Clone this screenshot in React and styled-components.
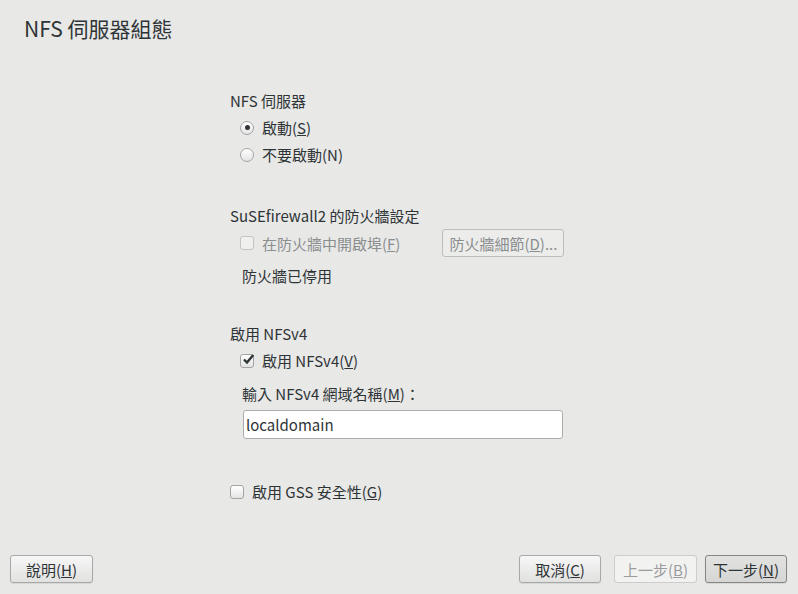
import React, { useState } from 'react';
import styled, { createGlobalStyle } from 'styled-components';

const GlobalStyle = createGlobalStyle`
  html, body {
    margin: 0;
    padding: 0;
    background: #e8e8e7;
  }
  body {
    font-family: "Noto Sans CJK TC", "Noto Sans", sans-serif;
    font-size: 15px;
    color: #2e3436;
  }
`;

const NfsServerConfig = () => {
  const [start, setStart] = useState('yes');
  const [nfs4, setNfs4] = useState(true);
  const [gss, setGss] = useState(false);
  const [domain, setDomain] = useState('localdomain');

  return (
    <Page>
      <GlobalStyle />
      <Header>NFS 伺服器組態</Header>
      <Content>
        <SectionLabel>NFS 伺服器</SectionLabel>
        <OptionRow indent={10}>
          <Radio checked={start === 'yes'} onClick={() => setStart('yes')} />
          <span>啟動(<u>S</u>)</span>
        </OptionRow>
        <OptionRow indent={10}>
          <Radio checked={start === 'no'} onClick={() => setStart('no')} />
          <span>不要啟動(N)</span>
        </OptionRow>

        <SectionLabel top={35} h={26}>SuSEfirewall2 的防火牆設定</SectionLabel>
        <OptionRow indent={10} h={28}>
          <Check disabled />
          <Muted>在防火牆中開啟埠(<u>F</u>)</Muted>
          <SmallButton disabled>防火牆細節(<u>D</u>)...</SmallButton>
        </OptionRow>
        <PlainText top={6}>防火牆已停用</PlainText>

        <SectionLabel top={32}>啟用 NFSv4</SectionLabel>
        <OptionRow indent={10}>
          <Check checked={nfs4} onClick={() => setNfs4(!nfs4)}>
            {nfs4 && (
              <svg width="13" height="13" viewBox="0 0 12 12">
                <path d="M1.8 6 L4.6 8.8 L10.4 1.8" fill="none" stroke="#2e3436" strokeWidth="2.2" />
              </svg>
            )}
          </Check>
          <span>啟用 NFSv4(<u>V</u>)</span>
        </OptionRow>
        <PlainText top={7}>輸入 NFSv4 網域名稱(<u>M</u>)：</PlainText>
        <DomainInput value={domain} onChange={(e) => setDomain(e.target.value)} />

        <OptionRow top={39}>
          <Check checked={gss} onClick={() => setGss(!gss)} />
          <span>啟用 GSS 安全性(<u>G</u>)</span>
        </OptionRow>
      </Content>
      <Footer>
        <Button>說明(<u>H</u>)</Button>
        <FooterRight>
          <Button w={82}>取消(<u>C</u>)</Button>
          <Button w={83} disabled style={{ marginLeft: 13 }}>上一步(<u>B</u>)</Button>
          <Button w={82} primary style={{ marginLeft: 8 }}>下一步(<u>N</u>)</Button>
        </FooterRight>
      </Footer>
    </Page>
  );
};

const Page = styled.div`
  height: 594px;
  display: flex;
  flex-direction: column;
  box-sizing: border-box;
`;

const Header = styled.div`
  font-size: 21px;
  line-height: 24px;
  padding: 16px 0 0 24px;
  height: 40px;
  box-sizing: border-box;
`;

const Content = styled.div`
  flex: 1;
  display: flex;
  flex-direction: column;
  padding: 48px 0 0 230px;
`;

const SectionLabel = styled.div`
  height: ${(p) => p.h || 26}px;
  line-height: ${(p) => p.h || 26}px;
  margin-top: ${(p) => p.top || 0}px;
`;

const OptionRow = styled.div`
  display: flex;
  align-items: center;
  height: ${(p) => p.h || 27}px;
  margin-top: ${(p) => p.top || 0}px;
  padding-left: ${(p) => p.indent || 0}px;
`;

const PlainText = styled.div`
  height: 26px;
  line-height: 26px;
  padding-left: 12px;
  margin-top: ${(p) => p.top || 0}px;
`;

const Muted = styled.span`
  color: #8b8e8f;
`;

const Radio = styled.span`
  width: 14px;
  height: 14px;
  border-radius: 50%;
  border: 1px solid #a3a3a3;
  background: linear-gradient(#ffffff, #e4e4e4);
  margin-right: 8px;
  display: inline-flex;
  align-items: center;
  justify-content: center;
  box-sizing: border-box;
  cursor: pointer;

  &::after {
    content: '';
    width: 5px;
    height: 5px;
    border-radius: 50%;
    background: ${(p) => (p.checked ? '#2e3436' : 'transparent')};
  }
`;

const Check = styled.span`
  width: 14px;
  height: 14px;
  border-radius: 3px;
  border: 1px solid ${(p) => (p.disabled ? '#c4c4c4' : '#a3a3a3')};
  background: ${(p) => (p.disabled ? '#f0f0ef' : 'linear-gradient(#ffffff, #e4e4e4)')};
  margin-right: 8px;
  display: inline-flex;
  align-items: center;
  justify-content: center;
  box-sizing: border-box;
  cursor: pointer;
  overflow: visible;

  svg {
    margin-top: -3px;
    margin-left: 2px;
    flex-shrink: 0;
  }
`;

const ButtonBase = styled.button`
  font-family: "Noto Sans CJK TC", "Noto Sans", sans-serif;
  font-size: 15px;
  height: 28px;
  padding: 0 4px;
  border-radius: 3px;
  box-sizing: border-box;
  cursor: pointer;
  white-space: nowrap;
`;

const SmallButton = styled(ButtonBase)`
  margin-left: 42px;
  width: 122px;
  color: #8b8e8f;
  border: 1px solid #bdbdbd;
  background: #ececeb;
`;

const Button = styled(ButtonBase)`
  width: ${(p) => p.w || 83}px;
  color: ${(p) => (p.disabled ? '#9a9c9d' : '#2e3436')};
  border: 1px solid ${(p) => (p.disabled ? '#cccccc' : p.primary ? '#868686' : '#a8a8a8')};
  background: ${(p) =>
    p.disabled
      ? '#f2f2f1'
      : p.primary
      ? 'linear-gradient(#e2e2e1, #d6d6d5)'
      : 'linear-gradient(#f7f7f7, #e1e1e0)'};
  box-shadow: ${(p) => (p.disabled ? 'none' : '0 1px 1px rgba(0,0,0,0.08)')};
`;

const DomainInput = styled.input`
  margin: 3px 0 0 13px;
  width: 320px;
  height: 29px;
  box-sizing: border-box;
  border: 1px solid #adadad;
  border-radius: 3px;
  background: #ffffff;
  padding: 0 2px;
  font-family: "Noto Sans CJK TC", "Noto Sans", sans-serif;
  font-size: 15px;
  color: #2e3436;
  outline: none;
`;

const Footer = styled.div`
  display: flex;
  justify-content: space-between;
  padding: 0 11px 11px 10px;
`;

const FooterRight = styled.div`
  display: flex;
`;

export default NfsServerConfig;
